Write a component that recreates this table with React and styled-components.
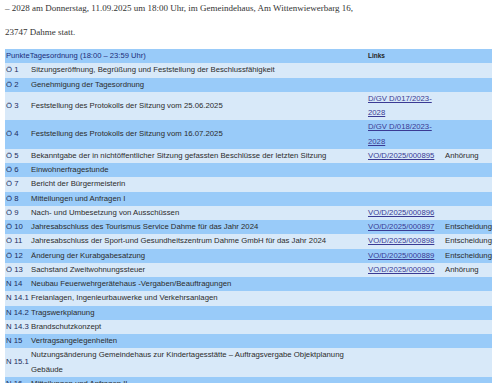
import React from "react";
import styled, { createGlobalStyle } from "styled-components";

const Global = createGlobalStyle`
  html, body { margin: 0; padding: 0; background: #fff; overflow: hidden; }
`;

const Page = styled.div`
  padding: 0 8px 0 5px;
`;

const Intro = styled.div`
  font-family: "Liberation Serif", "Times New Roman", serif;
  font-size: 9px;
  line-height: 24px;
  color: #333;
  margin-top: -4px;
  margin-bottom: 5px;
`;

const Table = styled.table`
  width: 487px;
  border-collapse: collapse;
  table-layout: fixed;
  font-family: "Liberation Sans", Arial, Helvetica, sans-serif;
  font-size: 7.75px;
  line-height: 14.25px;
`;

const Row = styled.tr`
  background: ${(p) => (p.$dark ? "#99cbf9" : "#d8e9f9")};
`;

const Head = styled.th`
  text-align: left;
  font-weight: ${(p) => (p.$bold ? "bold" : "normal")};
  font-size: ${(p) => (p.$bold ? "6.5px" : "7.6px")};
  color: ${(p) => (p.$bold ? "#222" : "#1c2c7a")};
  padding: 0 0 0 1px;
  vertical-align: middle;
`;

const Cell = styled.td`
  padding: 0 0 0 1px;
  vertical-align: middle;
  color: ${(p) => (p.$num ? "#1d2d5e" : "#2c2c2c")};
  white-space: ${(p) => (p.$nowrap ? "nowrap" : "normal")};
`;

const LinkCell = styled.td`
  padding: 0 0 0 1px;
  vertical-align: top;
`;

const DocLink = styled.a`
  color: #3a3a94;
  text-decoration: underline;
`;

const items = [
  ["Ö 1", "Sitzungseröffnung, Begrüßung und Feststellung der Beschlussfähigkeit"],
  ["Ö 2", "Genehmigung der Tagesordnung"],
  ["Ö 3", "Feststellung des Protokolls der Sitzung vom 25.06.2025", ["D/GV D/017/2023-", "2028"]],
  ["Ö 4", "Feststellung des Protokolls der Sitzung vom 16.07.2025", ["D/GV D/018/2023-", "2028"]],
  ["Ö 5", "Bekanntgabe der in nichtöffentlicher Sitzung gefassten Beschlüsse der letzten Sitzung", "VO/D/2025/000895", "Anhörung"],
  ["Ö 6", "Einwohnerfragestunde"],
  ["Ö 7", "Bericht der Bürgermeisterin"],
  ["Ö 8", "Mitteilungen und Anfragen I"],
  ["Ö 9", "Nach- und Umbesetzung von Ausschüssen", "VO/D/2025/000896"],
  ["Ö 10", "Jahresabschluss des Tourismus Service Dahme für das Jahr 2024", "VO/D/2025/000897", "Entscheidung"],
  ["Ö 11", "Jahresabschluss der Sport-und Gesundheitszentrum Dahme GmbH für das Jahr 2024", "VO/D/2025/000898", "Entscheidung"],
  ["Ö 12", "Änderung der Kurabgabesatzung", "VO/D/2025/000889", "Entscheidung"],
  ["Ö 13", "Sachstand Zweitwohnungssteuer", "VO/D/2025/000900", "Anhörung"],
  ["N 14", "Neubau Feuerwehrgerätehaus -Vergaben/Beauftragungen"],
  ["N 14.1", "Freianlagen, Ingenieurbauwerke und Verkehrsanlagen"],
  ["N 14.2", "Tragswerkplanung"],
  ["N 14.3", "Brandschutzkonzept"],
  ["N 15", "Vertragsangelegenheiten"],
  ["N 15.1", "Nutzungsänderung Gemeindehaus zur Kindertagesstätte – Auftragsvergabe Objektplanung Gebäude"],
  ["N 16", "Mitteilungen und Anfragen II"],
];

function renderLink(link) {
  if (!link) return null;
  if (Array.isArray(link)) {
    return (
      <DocLink href="#">
        {link[0]}
        <br />
        {link[1]}
      </DocLink>
    );
  }
  return <DocLink href="#">{link}</DocLink>;
}

export default function App() {
  return (
    <>
      <Global />
      <Page>
        <Intro>
          – 2028 am Donnerstag, 11.09.2025 um 18:00 Uhr, im Gemeindehaus, Am Wittenwiewerbarg 16,
          <br />
          23747 Dahme statt.
        </Intro>
        <Table>
          <colgroup>
            <col style={{ width: 25 }} />
            <col style={{ width: 337 }} />
            <col style={{ width: 77 }} />
            <col style={{ width: 48 }} />
          </colgroup>
          <thead>
            <Row $dark>
              <Head colSpan={2}>PunkteTagesordnung (18:00 – 23:59 Uhr)</Head>
              <Head $bold>Links</Head>
              <Head />
            </Row>
          </thead>
          <tbody>
            {items.map(([num, text, link, kind], i) => (
              <Row key={num} $dark={i % 2 === 1}>
                <Cell $num $nowrap>{num}</Cell>
                <Cell>{text}</Cell>
                <LinkCell>{renderLink(link)}</LinkCell>
                <Cell $nowrap>{kind || ""}</Cell>
              </Row>
            ))}
          </tbody>
        </Table>
      </Page>
    </>
  );
}
